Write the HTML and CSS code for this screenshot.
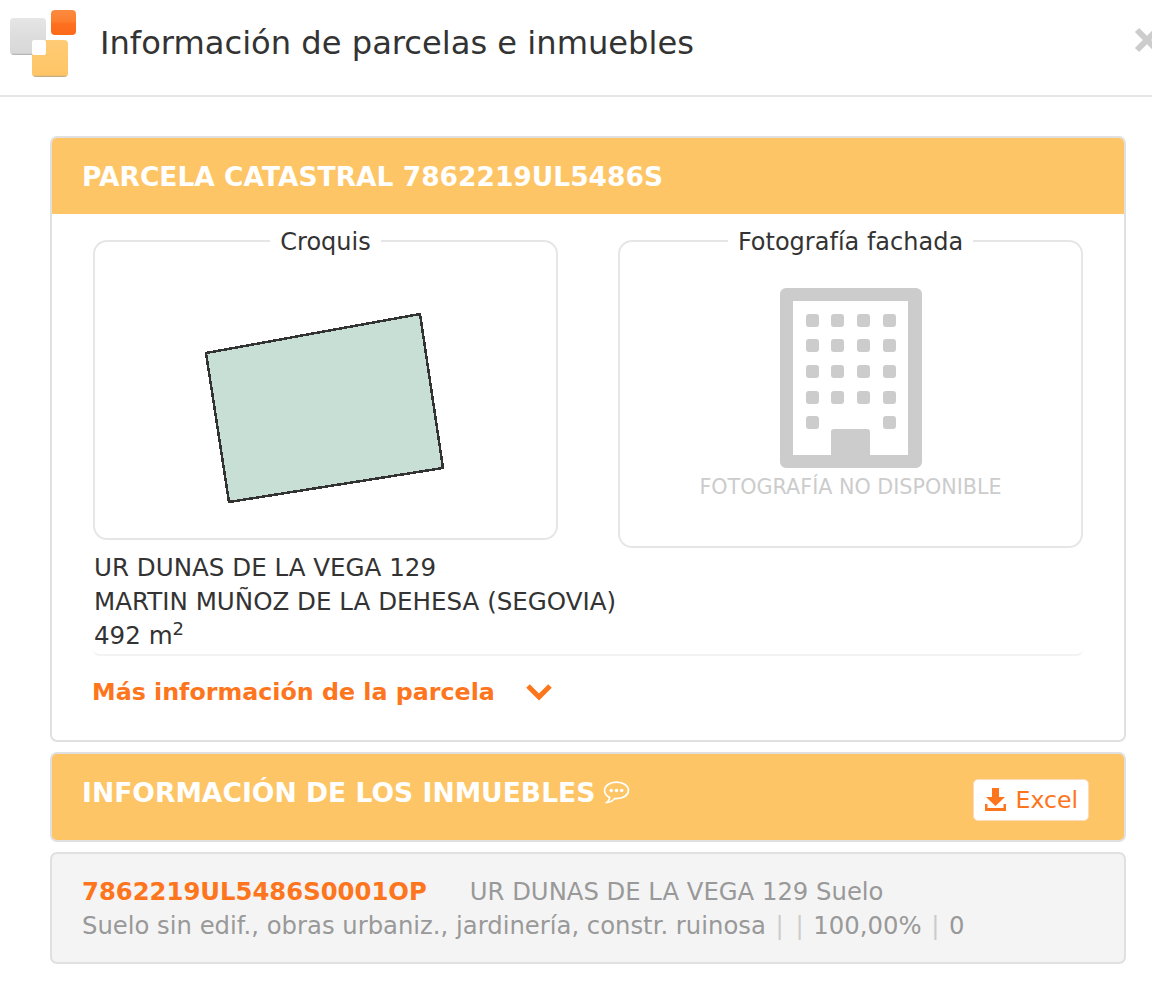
FILE: index.html
```html
<!DOCTYPE html>
<html lang="es">

<head>
    <meta charset="UTF-8">
    <meta name="viewport" content="width=device-width, initial-scale=1.0">
    <title>Información de parcelas e inmuebles</title>

    <link rel="stylesheet" href="styles.css">
</head>

<body>
    <header class="modal-header">
        <svg class="logo" width="70" height="70" viewBox="0 0 70 70">
            <defs>
                <linearGradient id="logoGray" x1="0" y1="0" x2="0" y2="1">
                    <stop offset="0" stop-color="#e6e6e6" />
                    <stop offset="0.5" stop-color="#dddddd" />
                    <stop offset="0.95" stop-color="#d8d8d8" />
                    <stop offset="1" stop-color="#a8a8a8" />
                </linearGradient>
                <linearGradient id="logoOrange" x1="0" y1="0" x2="0" y2="1">
                    <stop offset="0" stop-color="#fb8a3f" />
                    <stop offset="0.45" stop-color="#fd7f2e" />
                    <stop offset="0.55" stop-color="#fd6f1f" />
                    <stop offset="1" stop-color="#fd6a18" />
                </linearGradient>
                <linearGradient id="logoYellow" x1="0" y1="0" x2="0" y2="1">
                    <stop offset="0" stop-color="#fecb74" />
                    <stop offset="0.95" stop-color="#fec566" />
                    <stop offset="1" stop-color="#b0a48c" />
                </linearGradient>
            </defs>
            <rect x="0" y="8" width="36" height="37" rx="4" fill="url(#logoGray)" />
            <rect x="41" y="0" width="25" height="25" rx="4" fill="url(#logoOrange)" />
            <rect x="22" y="30" width="36" height="37" rx="4" fill="url(#logoYellow)" />
            <rect x="22" y="30" width="14" height="15" rx="2" fill="#ffffff" />
        </svg>
        <h1>Información de parcelas e inmuebles</h1>
        <svg class="close" width="26" height="26" viewBox="0 0 26 26">
            <path d="M3 3 L23 23 M23 3 L3 23" stroke="#cccccc" stroke-width="6" fill="none" />
        </svg>
    </header>

    <main class="content">
        <section class="card">
            <h2 class="card-title">PARCELA CATASTRAL 7862219UL5486S</h2>
            <div class="card-body">
                <div class="boxes">
                    <div class="left-col">
                        <fieldset class="box box-sketch">
                            <legend>Croquis</legend>
                            <svg class="sketch" width="240" height="192" viewBox="0 0 240 192">
                                <polygon points="1,40 215,1 238,155 24,189" fill="#c8dfd6" stroke="#333333"
                                    stroke-width="2.500" shape-rendering="crispEdges" />
                            </svg>
                        </fieldset>
                    </div>
                    <fieldset class="box box-photo">
                        <legend>Fotografía fachada</legend>
                        <svg class="building" width="142" height="180" viewBox="0 0 142 180">
                            <path fill-rule="evenodd" fill="#cccccc"
                                d="M6 0 H136 a6 6 0 0 1 6 6 V174 a6 6 0 0 1 -6 6 H6 a6 6 0 0 1 -6 -6 V6 a6 6 0 0 1 6 -6 Z M13 13 V167 H51 V144 a3 3 0 0 1 3 -3 H87 a3 3 0 0 1 3 3 V167 H128 V13 Z" />
                            <g fill="#cccccc">
                                <rect x="26" y="26" width="13" height="13" rx="3" />
                                <rect x="51" y="26" width="13" height="13" rx="3" />
                                <rect x="77" y="26" width="13" height="13" rx="3" />
                                <rect x="103" y="26" width="13" height="13" rx="3" />
                                <rect x="26" y="51" width="13" height="13" rx="3" />
                                <rect x="51" y="51" width="13" height="13" rx="3" />
                                <rect x="77" y="51" width="13" height="13" rx="3" />
                                <rect x="103" y="51" width="13" height="13" rx="3" />
                                <rect x="26" y="77" width="13" height="13" rx="3" />
                                <rect x="51" y="77" width="13" height="13" rx="3" />
                                <rect x="77" y="77" width="13" height="13" rx="3" />
                                <rect x="103" y="77" width="13" height="13" rx="3" />
                                <rect x="26" y="103" width="13" height="13" rx="3" />
                                <rect x="51" y="103" width="13" height="13" rx="3" />
                                <rect x="77" y="103" width="13" height="13" rx="3" />
                                <rect x="103" y="103" width="13" height="13" rx="3" />
                                <rect x="26" y="128" width="13" height="13" rx="3" />
                                <rect x="103" y="128" width="13" height="13" rx="3" />
                            </g>
                        </svg>
                        <p class="no-photo">FOTOGRAFÍA NO DISPONIBLE</p>
                    </fieldset>
                </div>
                <div class="address">
                    <p>UR DUNAS DE LA VEGA 129</p>
                    <p>MARTIN MUÑOZ DE LA DEHESA (SEGOVIA)</p>
                    <p>492 m<sup>2</sup></p>
                </div>
                <a class="more-link" href="#">
                    <span>Más información de la parcela</span>
                    <svg width="28" height="18" viewBox="0 0 28 18">
                        <path d="M3 3 L14 14 L25 3" stroke="#fd751c" stroke-width="5" fill="none" />
                    </svg>
                </a>
            </div>
        </section>

        <section class="card card-bar">
            <h2 class="bar-title">
                INFORMACIÓN DE LOS INMUEBLES
                <svg width="27" height="25" viewBox="0 0 26 24">
                    <path d="M13 2 C6.5 2 1.5 5.500 1.500 10 C1.500 13 3.500 15.300 6.500 16.700 C6.300 18.500 5.500 20 3.800 21.500 C7 21.300 9.500 20 11.300 17.800 C11.900 17.900 12.400 17.900 13 17.900 C19.500 17.900 24.500 14.500 24.500 10 C24.500 5.500 19.500 2 13 2 Z" fill="none" stroke="#ffffff" stroke-width="1.600" />
                    <circle cx="8" cy="10" r="1.700" fill="#ffffff" />
                    <circle cx="13" cy="10" r="1.700" fill="#ffffff" />
                    <circle cx="18" cy="10" r="1.700" fill="#ffffff" />
                </svg>
            </h2>
            <a class="excel-btn" href="#">
                <svg width="21" height="24" viewBox="0 0 21 24">
                    <path d="M7 0 H14 V9 H20 L10.500 18 L1 9 H7 Z" fill="#fd751c" />
                    <rect x="0" y="20" width="21" height="3" fill="#fd751c" />
                    <rect x="0" y="16" width="2.500" height="6" fill="#fd751c" />
                    <rect x="18.500" y="16" width="2.500" height="6" fill="#fd751c" />
                </svg>
                Excel
            </a>
        </section>

        <section class="card property">
            <p><a class="ref" href="#">7862219UL5486S0001OP</a><span class="prop-addr">UR DUNAS DE LA VEGA 129 Suelo</span></p>
            <p>Suelo sin edif., obras urbaniz., jardinería, constr. ruinosa <span class="sep">|</span> <span class="sep">|</span> 100,00% <span class="sep">|</span> 0</p>
        </section>
    </main>
</body>

</html>
```

FILE: styles.css
```css
* {
    box-sizing: border-box;
}

body {
    font-family: "DejaVu Sans", Verdana, sans-serif;
    margin: 0;
    padding: 0;
    background-color: #fff;
    color: #333;
    overflow: hidden;
}

p {
    margin: 0;
}

a {
    text-decoration: none;
}

.modal-header {
    display: flex;
    align-items: center;
    height: 97px;
    padding: 0 0 10px 10px;
    border-bottom: 2px solid #e6e6e6;
    position: relative;
}

.logo {
    flex-shrink: 0;
    margin-top: 4px;
}

.modal-header h1 {
    margin: 0 0 0 20px;
    font-size: 32.150px;
    font-weight: normal;
    color: #333;
}

.close {
    position: absolute;
    top: 27px;
    left: 1134px;
}

.content {
    padding: 39px 26px 0 50px;
}

.card {
    border: 2px solid #e0e0e0;
    border-radius: 7px;
    margin-bottom: 10px;
}

.card-title {
    margin: 0;
    height: 76px;
    padding: 0 30px;
    display: flex;
    align-items: center;
    background-color: #fec566;
    color: #fff;
    font-size: 26.500px;
    font-weight: bold;
    border-radius: 5px 5px 0 0;
}

.card-body {
    padding: 14px 41px 0 41px;
    height: 526px;
}

.boxes {
    display: flex;
    justify-content: space-between;
    align-items: flex-start;
}

.left-col {
    width: 465px;
    height: 312px;
}

.box {
    margin: 0;
    padding: 0;
    width: 465px;
    border: 2px solid #e6e6e6;
    border-radius: 14px;
    text-align: center;
}

.box legend {
    font-size: 24px;
    padding: 2px 10px 0;
    margin: 0 auto;
    color: #333;
    line-height: 24px;
}

.box-sketch {
    height: 312px;
}

.box-photo {
    height: 320px;
}

.sketch {
    display: block;
    margin: 59px 0 0 110px;
}

.building {
    display: block;
    margin: 34px auto 0;
}

.no-photo {
    font-size: 20.700px;
    color: #ccc;
    margin-top: 7px;
}

.address {
    margin: 3px -1px 0;
    padding: 0 0 1px 2px;
    font-size: 24.550px;
    line-height: 34px;
    border-bottom: 2px solid #f3f3f3;
    border-radius: 0 0 8px 8px;
}

.address sup {
    font-size: 18px;
    line-height: 0;
}

.more-link {
    display: flex;
    align-items: center;
    gap: 30px;
    margin-top: 22px;
    color: #fd751c;
    font-size: 23.750px;
    font-weight: bold;
    margin-left: -1px;
}

.card-bar {
    height: 90px;
    display: flex;
    justify-content: space-between;
    align-items: center;
    background-color: #fec566;
    padding: 0 35px 0 30px;
}

.bar-title {
    margin: 0 0 10px 0;
    color: #fff;
    font-size: 26.600px;
    font-weight: bold;
    display: flex;
    align-items: center;
    gap: 8px;
}

.excel-btn {
    display: flex;
    align-items: center;
    gap: 10px;
    height: 42px;
    padding: 0 10px 0 11px;
    background-color: #fff;
    border-radius: 5px;
    border: 1px solid #ffd9b8;
    color: #fd751c;
    font-size: 23.600px;
    margin-top: 6px;
}

.property {
    height: 112px;
    padding: 21px 30px 0 30px;
    background-color: #f4f4f4;
    color: #999;
    font-size: 24.300px;
    line-height: 34px;
}

.ref {
    color: #fd751c;
    font-weight: bold;
}

.prop-addr {
    margin-left: 43px;
}

.sep {
    color: #ccc;
    margin: 0 2px;
}
```
